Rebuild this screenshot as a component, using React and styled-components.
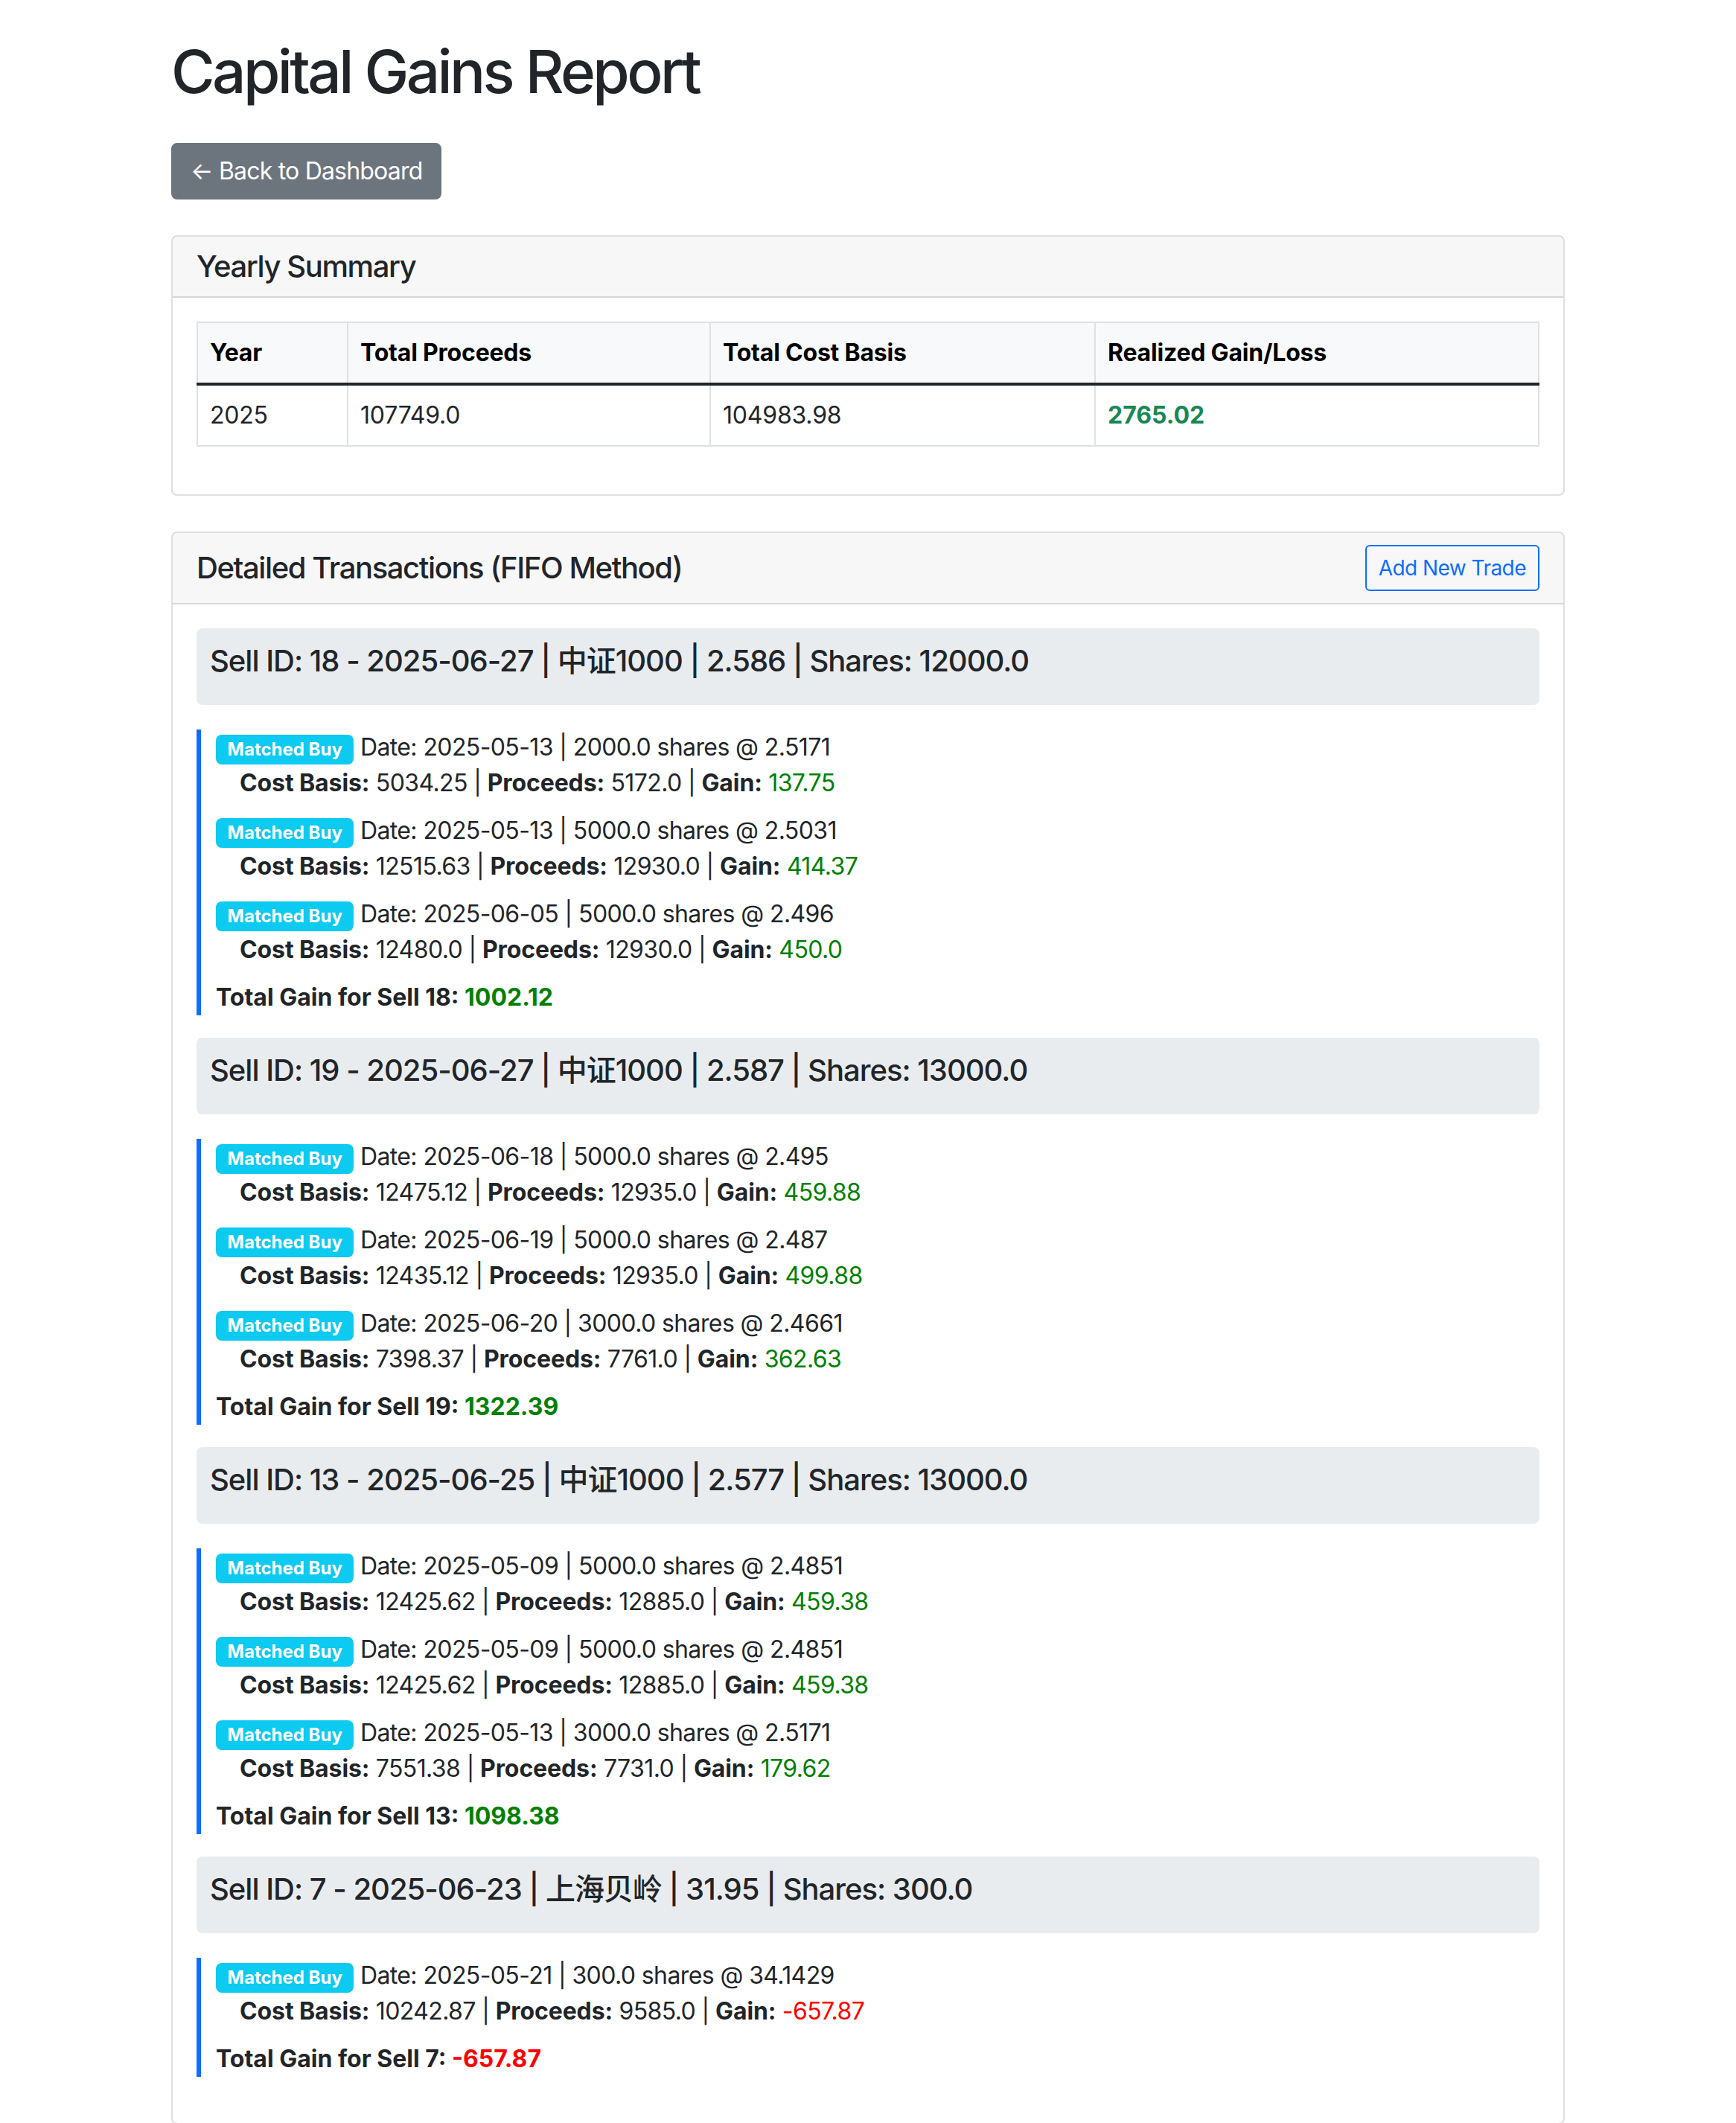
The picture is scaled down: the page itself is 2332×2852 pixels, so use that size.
import React from 'react';
import styled, { createGlobalStyle } from 'styled-components';

const GlobalStyle = createGlobalStyle`
  *, *::before, *::after { box-sizing: border-box; }
  html { font-size: 32px; }
  body {
    margin: 0;
    font-family: Inter, "Noto Sans CJK SC", sans-serif;
    font-size: 32px;
    line-height: 1.5;
    letter-spacing: -0.6px;
    color: #212529;
    background: #fff;
    -webkit-font-smoothing: antialiased;
  }
`;

const Container = styled.div`
  width: 1872px;
  margin: 0 auto;
  padding-top: 48px;
`;

const Title = styled.h1`
  margin: 0 0 48px;
  font-size: 80px;
  font-weight: 500;
  line-height: 1.2;
  letter-spacing: -3.6px;
`;

const ButtonRow = styled.div`
  margin-bottom: 48px;
`;

const BackButton = styled.a`
  display: inline-block;
  padding: 12px 24px;
  font-size: 32px;
  line-height: 48px;
  letter-spacing: -0.8px;
  color: #fff;
  background: #6c757d;
  border: 2px solid #6c757d;
  border-radius: 8px;
  text-decoration: none;
  cursor: pointer;
`;

const Card = styled.section`
  background: #fff;
  border: 2px solid rgba(0, 0, 0, 0.125);
  border-radius: 8px;
  margin-bottom: 48px;
`;

const CardHeader = styled.div`
  display: flex;
  justify-content: space-between;
  align-items: center;
  padding: 16px 32px;
  background: rgba(0, 0, 0, 0.03);
  border-bottom: 2px solid rgba(0, 0, 0, 0.125);
  border-radius: 6px 6px 0 0;
`;

const CardTitle = styled.h5`
  margin: 0;
  font-size: 40px;
  font-weight: 500;
  line-height: 1.2;
  letter-spacing: -1.4px;
`;

const CardBody = styled.div`
  padding: 32px;
`;

const OutlineButton = styled.button`
  font-family: inherit;
  font-size: 28px;
  line-height: 42px;
  letter-spacing: -0.55px;
  padding: 8px 16px;
  color: #0d6efd;
  background: transparent;
  border: 2px solid #0d6efd;
  border-radius: 6px;
  cursor: pointer;
`;

const Table = styled.table`
  width: 100%;
  table-layout: fixed;
  border-collapse: collapse;
  margin-bottom: 32px;
  color: #212529;
`;

const Th = styled.th`
  padding: 16px;
  text-align: left;
  font-weight: 700;
  letter-spacing: -0.2px;
  color: #000;
  background: #f8f9fa;
  border: 2px solid #dfe0e1;
  border-bottom: 4px solid #212529;
`;

const Td = styled.td`
  padding: 16px;
  border: 2px solid #dee2e6;
  border-top: 4px solid #212529;
  font-weight: ${(p) => (p.$strong ? 700 : 400)};
  letter-spacing: ${(p) => (p.$strong ? '0' : '-0.2px')};
  color: ${(p) => p.$color || 'inherit'};
`;

const SellHeader = styled.h5`
  margin: 0 0 33px;
  padding: 20px 18px 35px;
  font-size: 40px;
  font-weight: 500;
  line-height: 48px;
  letter-spacing: -1px;
  background: #e9ecef;
  border-radius: 8px;
`;

const MatchBlock = styled.div`
  border-left: 6px solid #0d6efd;
  padding-left: 20px;
  margin-bottom: 30px;
`;

const Item = styled.div`
  margin-bottom: 16px;
`;

const Badge = styled.span`
  display: inline-block;
  padding: 0.35em 0.65em;
  font-size: 24px;
  font-weight: 700;
  line-height: 1;
  letter-spacing: 0;
  color: #fff;
  background: #0dcaf0;
  border-radius: 8px;
  white-space: nowrap;
  vertical-align: baseline;
`;

const Detail = styled.div`
  margin-left: 32px;
`;

const Label = styled.strong`
  font-weight: 700;
  letter-spacing: -0.1px;
`;

const Amount = styled.span`
  color: ${(p) => (p.$negative ? '#ff0000' : '#008000')};
  font-weight: ${(p) => (p.$bold ? 700 : 'inherit')};
`;

const Total = styled.div`
  font-weight: 700;
  letter-spacing: 0;
`;

const sells = [
  {
    id: 18,
    date: '2025-06-27',
    name: '中证1000',
    price: '2.586',
    shares: '12000.0',
    total: '1002.12',
    buys: [
      ['2025-05-13', '2000.0', '2.5171', '5034.25', '5172.0', '137.75'],
      ['2025-05-13', '5000.0', '2.5031', '12515.63', '12930.0', '414.37'],
      ['2025-06-05', '5000.0', '2.496', '12480.0', '12930.0', '450.0'],
    ],
  },
  {
    id: 19,
    date: '2025-06-27',
    name: '中证1000',
    price: '2.587',
    shares: '13000.0',
    total: '1322.39',
    buys: [
      ['2025-06-18', '5000.0', '2.495', '12475.12', '12935.0', '459.88'],
      ['2025-06-19', '5000.0', '2.487', '12435.12', '12935.0', '499.88'],
      ['2025-06-20', '3000.0', '2.4661', '7398.37', '7761.0', '362.63'],
    ],
  },
  {
    id: 13,
    date: '2025-06-25',
    name: '中证1000',
    price: '2.577',
    shares: '13000.0',
    total: '1098.38',
    buys: [
      ['2025-05-09', '5000.0', '2.4851', '12425.62', '12885.0', '459.38'],
      ['2025-05-09', '5000.0', '2.4851', '12425.62', '12885.0', '459.38'],
      ['2025-05-13', '3000.0', '2.5171', '7551.38', '7731.0', '179.62'],
    ],
  },
  {
    id: 7,
    date: '2025-06-23',
    name: '上海贝岭',
    price: '31.95',
    shares: '300.0',
    total: '-657.87',
    buys: [['2025-05-21', '300.0', '34.1429', '10242.87', '9585.0', '-657.87']],
  },
];

export default function App() {
  return (
    <>
      <GlobalStyle />
      <Container>
        <Title>Capital Gains Report</Title>
        <ButtonRow>
          <BackButton>← Back to Dashboard</BackButton>
        </ButtonRow>

        <Card>
          <CardHeader>
            <CardTitle>Yearly Summary</CardTitle>
          </CardHeader>
          <CardBody>
            <Table>
              <colgroup>
                <col style={{ width: '202px' }} />
                <col style={{ width: '487px' }} />
                <col style={{ width: '517px' }} />
                <col />
              </colgroup>
              <thead>
                <tr>
                  <Th>Year</Th>
                  <Th>Total Proceeds</Th>
                  <Th>Total Cost Basis</Th>
                  <Th>Realized Gain/Loss</Th>
                </tr>
              </thead>
              <tbody>
                <tr>
                  <Td>2025</Td>
                  <Td>107749.0</Td>
                  <Td>104983.98</Td>
                  <Td $strong $color="#198754">2765.02</Td>
                </tr>
              </tbody>
            </Table>
          </CardBody>
        </Card>

        <Card>
          <CardHeader>
            <CardTitle>Detailed Transactions (FIFO Method)</CardTitle>
            <OutlineButton>Add New Trade</OutlineButton>
          </CardHeader>
          <CardBody>
            {sells.map((s) => (
              <div key={s.id}>
                <SellHeader>
                  Sell ID: {s.id} - {s.date} | {s.name} | {s.price} | Shares: {s.shares}
                </SellHeader>
                <MatchBlock>
                  {s.buys.map((b, i) => (
                    <Item key={i}>
                      <Badge>Matched Buy</Badge> Date: {b[0]} | {b[1]} shares @ {b[2]}
                      <Detail>
                        <Label>Cost Basis:</Label> {b[3]} | <Label>Proceeds:</Label> {b[4]} |{' '}
                        <Label>Gain:</Label>{' '}
                        <Amount $negative={b[5].startsWith('-')}>{b[5]}</Amount>
                      </Detail>
                    </Item>
                  ))}
                  <Total>
                    Total Gain for Sell {s.id}:{' '}
                    <Amount $bold $negative={s.total.startsWith('-')}>
                      {s.total}
                    </Amount>
                  </Total>
                </MatchBlock>
              </div>
            ))}
          </CardBody>
        </Card>
      </Container>
    </>
  );
}
